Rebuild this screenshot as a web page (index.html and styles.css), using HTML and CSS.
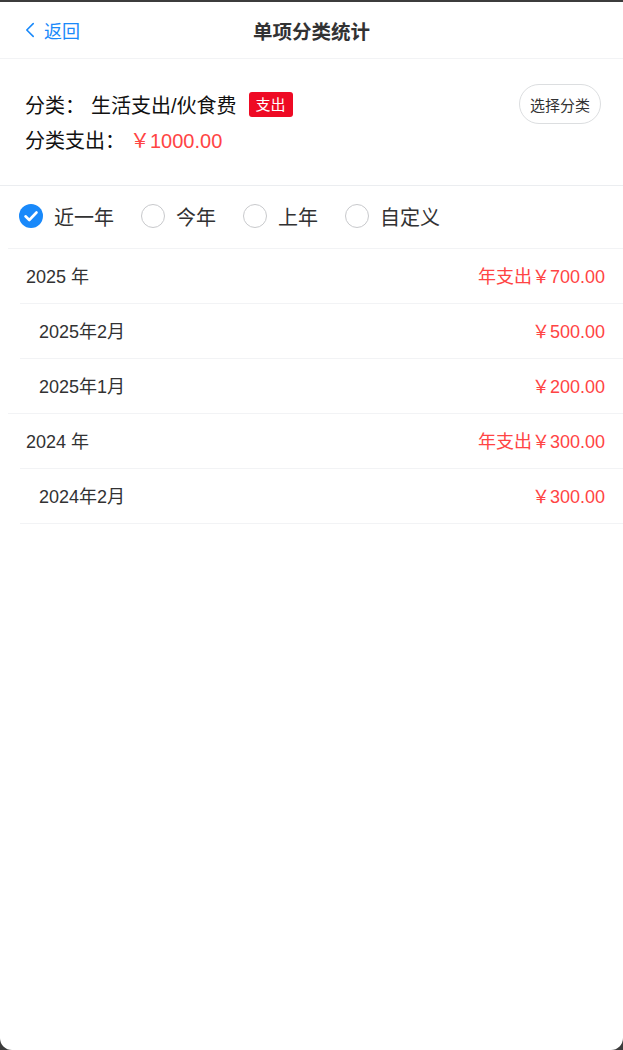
FILE: index.html
```html
<!DOCTYPE html>
<html lang="zh-CN">
<head>
<meta charset="utf-8">
<title>单项分类统计</title>
<link rel="stylesheet" href="styles.css">
</head>
<body>
<div class="app">
  <header class="navbar">
    <a class="nav-back">
      <svg class="back-icon" viewBox="0 0 12 20" width="10" height="16"><path d="M10 2 L2 10 L10 18" fill="none" stroke="#1989fa" stroke-width="2" stroke-linecap="round" stroke-linejoin="round"/></svg>
      <span>返回</span>
    </a>
    <div class="nav-title">单项分类统计</div>
  </header>

  <section class="info">
    <div class="info-text">
      <div class="info-line">
        <span class="label">分类：</span>
        <span class="cat">生活支出/伙食费</span>
        <span class="tag">支出</span>
      </div>
      <div class="info-line">
        <span class="label">分类支出：</span>
        <span class="total">￥1000.00</span>
      </div>
    </div>
    <button class="pick-btn">选择分类</button>
  </section>

  <div class="radios">
    <label class="radio checked"><span class="dot"><svg viewBox="0 0 24 24" width="24" height="24"><circle cx="12" cy="12" r="12" fill="#1989fa"/><path d="M6.5 12.3 L10.3 16 L17.5 8.5" fill="none" stroke="#fff" stroke-width="2.6" stroke-linecap="round" stroke-linejoin="round"/></svg></span><span class="rlabel">近一年</span></label>
    <label class="radio"><span class="dot"></span><span class="rlabel">今年</span></label>
    <label class="radio"><span class="dot"></span><span class="rlabel">上年</span></label>
    <label class="radio"><span class="dot"></span><span class="rlabel">自定义</span></label>
  </div>

  <div class="list">
    <div class="row year"><span>2025 年</span><span class="amt">年支出￥700.00</span></div>
    <div class="row month"><span>2025年2月</span><span class="amt">￥500.00</span></div>
    <div class="row month"><span>2025年1月</span><span class="amt">￥200.00</span></div>
    <div class="row year"><span>2024 年</span><span class="amt">年支出￥300.00</span></div>
    <div class="row month"><span>2024年2月</span><span class="amt">￥300.00</span></div>
  </div>
</div>
</body>
</html>
```

FILE: styles.css
```css
html {
  background: #3c3c3c;
}
body {
  margin: 0;
  font-family: "Liberation Sans", "Noto Sans CJK SC", sans-serif;
  color: #323233;
}
.app {
  margin-top: 2px;
  height: 1048px;
  background: #fff;
  border-radius: 0 0 12px 12px;
  overflow: hidden;
}
.navbar {
  position: relative;
  height: 56px;
  display: flex;
  align-items: center;
  justify-content: center;
  border-bottom: 1px solid #f2f3f5;
}
.nav-back {
  position: absolute;
  left: 25px;
  top: 0;
  height: 56px;
  display: flex;
  align-items: center;
  gap: 9px;
  color: #1989fa;
  font-size: 18px;
}
.back-icon {
  display: block;
}
.nav-title {
  font-size: 19.5px;
  font-weight: 700;
  color: #323233;
}
.info {
  display: flex;
  justify-content: space-between;
  align-items: flex-start;
  padding: 25px 22px 31px 25px;
  border-bottom: 1px solid #ebedf0;
}
.info-text {
  display: flex;
  flex-direction: column;
  gap: 6px;
  padding-top: 6px;
}
.info-line {
  display: flex;
  align-items: center;
  height: 29px;
  font-size: 20px;
  color: #111;
}
.cat {
  margin-left: 6px;
}
.tag {
  margin-left: 12px;
  background: #ee0a24;
  color: #fff;
  font-size: 15px;
  height: 25px;
  line-height: 25px;
  padding: 0 7px;
  border-radius: 3px;
}
.total {
  margin-left: 5px;
  color: #f44;
}
.pick-btn {
  height: 40px;
  padding: 0 10px;
  background: #fff;
  border: 1px solid #dcdee0;
  border-radius: 20px;
  font-family: inherit;
  font-size: 15px;
  color: #323233;
}
.radios {
  display: flex;
  align-items: center;
  height: 62px;
  box-sizing: border-box;
  padding-left: 19px;
  padding-bottom: 2px;
  gap: 27px;
}
.radio {
  display: flex;
  align-items: center;
  gap: 11px;
  font-size: 20px;
}
.dot {
  width: 24px;
  height: 24px;
  box-sizing: border-box;
  border: 1px solid #c8c9cc;
  border-radius: 50%;
  display: block;
}
.radio.checked .dot {
  border: none;
}
.dot svg {
  display: block;
}
.row {
  display: flex;
  justify-content: space-between;
  align-items: center;
  height: 55px;
  box-sizing: border-box;
  font-size: 18px;
  color: #323233;
  padding-right: 18px;
  padding-bottom: 3px;
  border-top: 1px solid #f2f3f5;
}
.amt {
  color: #f44;
}
.year {
  margin-left: 8px;
  padding-left: 18px;
}
.month {
  margin-left: 20px;
  padding-left: 19px;
}
.list::after {
  content: "";
  display: block;
  margin-left: 20px;
  border-top: 1px solid #f2f3f5;
}
```
